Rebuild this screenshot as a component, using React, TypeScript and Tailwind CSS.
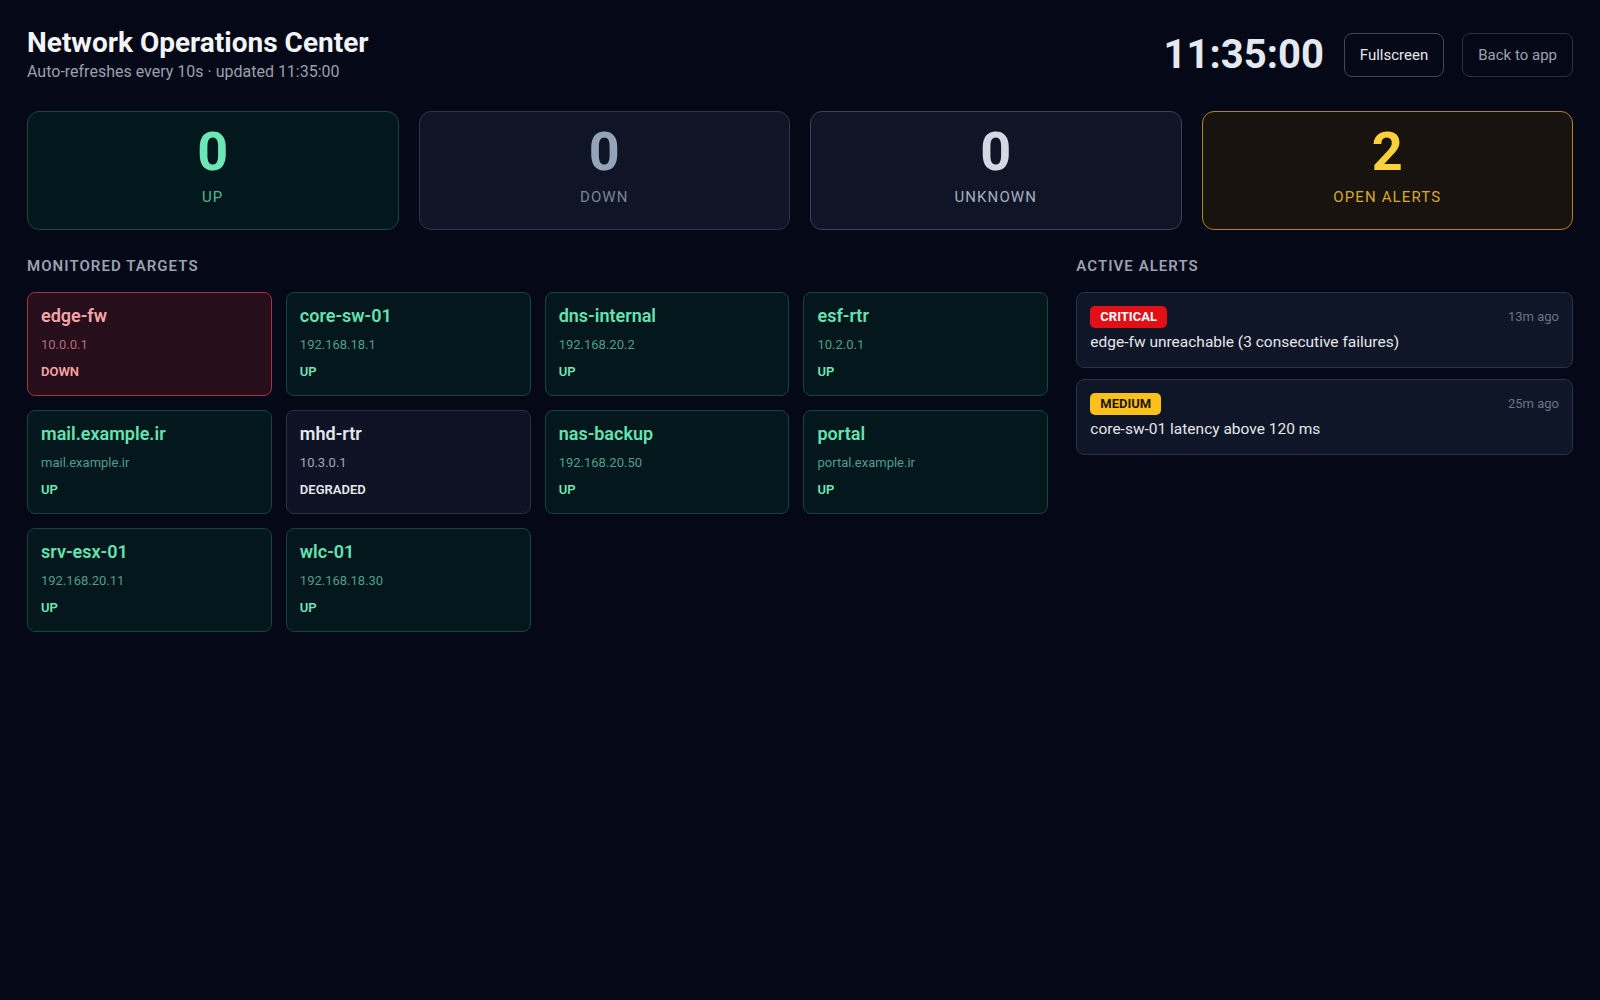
import React from "react";

type TargetStatus = "UP" | "DOWN" | "DEGRADED";

interface Target {
  name: string;
  address: string;
  status: TargetStatus;
}

interface Alert {
  severity: "CRITICAL" | "MEDIUM";
  message: string;
  age: string;
}

const targets: Target[] = [
  { name: "edge-fw", address: "10.0.0.1", status: "DOWN" },
  { name: "core-sw-01", address: "192.168.18.1", status: "UP" },
  { name: "dns-internal", address: "192.168.20.2", status: "UP" },
  { name: "esf-rtr", address: "10.2.0.1", status: "UP" },
  { name: "mail.example.ir", address: "mail.example.ir", status: "UP" },
  { name: "mhd-rtr", address: "10.3.0.1", status: "DEGRADED" },
  { name: "nas-backup", address: "192.168.20.50", status: "UP" },
  { name: "portal", address: "portal.example.ir", status: "UP" },
  { name: "srv-esx-01", address: "192.168.20.11", status: "UP" },
  { name: "wlc-01", address: "192.168.18.30", status: "UP" },
];

const alerts: Alert[] = [
  {
    severity: "CRITICAL",
    message: "edge-fw unreachable (3 consecutive failures)",
    age: "13m ago",
  },
  {
    severity: "MEDIUM",
    message: "core-sw-01 latency above 120 ms",
    age: "25m ago",
  },
];

const statCards = [
  {
    value: 0,
    label: "UP",
    box: "bg-[#03181d] border-[#124a45]",
    num: "text-[#6ee7b7]",
    lbl: "text-[#4cb892]",
  },
  {
    value: 0,
    label: "DOWN",
    box: "bg-[#0f1527] border-[#2e3549]",
    num: "text-[#94a3b8]",
    lbl: "text-[#7b8494]",
  },
  {
    value: 0,
    label: "UNKNOWN",
    box: "bg-[#0f1527] border-[#3a4254]",
    num: "text-[#d2d9e5]",
    lbl: "text-[#a7afbd]",
  },
  {
    value: 2,
    label: "OPEN ALERTS",
    box: "bg-[#18130f] border-[#b1861f]",
    num: "text-[#fcd03a]",
    lbl: "text-[#d8a92a]",
  },
];

const targetStyles: Record<
  TargetStatus,
  { box: string; name: string; addr: string; status: string }
> = {
  UP: {
    box: "bg-[#03171c] border-[#124741]",
    name: "text-[#62e3b0]",
    addr: "text-[#4d9f88]",
    status: "text-[#6ee7b7]",
  },
  DOWN: {
    box: "bg-[#260e1b] border-[#a93242]",
    name: "text-[#f8a5a9]",
    addr: "text-[#b46c76]",
    status: "text-[#fca5a5]",
  },
  DEGRADED: {
    box: "bg-[#0f1224] border-[#2b3046]",
    name: "text-[#e2e8f0]",
    addr: "text-[#a0a7b5]",
    status: "text-[#e5e7eb]",
  },
};

const TargetCard: React.FC<{ target: Target }> = ({ target }) => {
  const s = targetStyles[target.status];
  return (
    <div className={`rounded-lg border px-[13px] pt-[9px] pb-[13px] ${s.box}`}>
      <div className={`text-lg leading-7 font-semibold ${s.name}`}>
        {target.name}
      </div>
      <div className={`mt-[5px] text-[13px] leading-5 ${s.addr}`}>
        {target.address}
      </div>
      <div className={`mt-[7px] text-[13px] leading-5 font-semibold ${s.status}`}>
        {target.status}
      </div>
    </div>
  );
};

const AlertCard: React.FC<{ alert: Alert }> = ({ alert }) => {
  const badge =
    alert.severity === "CRITICAL"
      ? "bg-[#e30f17] text-white"
      : "bg-[#fcc01c] text-[#1c1606]";
  return (
    <div className="rounded-lg border border-[#283247] bg-[#0f1628] px-[13px] pt-[13px] pb-[14px]">
      <div className="flex items-center justify-between">
        <span
          className={`rounded-[5px] px-2.5 text-[13px] leading-[22px] font-bold ${badge}`}
        >
          {alert.severity}
        </span>
        <span className="text-[13px] text-[#6b7384]">{alert.age}</span>
      </div>
      <div className="mt-[3px] text-[15.5px] leading-[22px] text-[#e5e7eb]">
        {alert.message}
      </div>
    </div>
  );
};

export default function App() {
  return (
    <div className="min-h-screen bg-[#040817] px-[27px] pt-[26px] pb-10 font-['Roboto',sans-serif] text-white">
      {/* header */}
      <div className="flex items-center justify-between">
        <div>
          <h1 className="text-[28px] leading-[34px] font-bold text-[#f3f4f6]">
            Network Operations Center
          </h1>
          <p className="mt-px text-base leading-[22px] text-[#9aa1ae]">
            Auto-refreshes every 10s · updated 11:35:00
          </p>
        </div>
        <div className="flex items-center gap-[18px]">
          <div className="mr-0.5 text-[40px] leading-[48px] font-bold text-[#e4e8f0]">
            11:35:00
          </div>
          <button className="rounded-lg border border-[#414859] px-[15px] py-2.5 text-[15px] leading-[22px] text-[#e5e7eb]">
            Fullscreen
          </button>
          <button className="rounded-lg border border-[#2b3141] px-[15px] py-2.5 text-[15px] leading-[22px] text-[#9ca3af]">
            Back to app
          </button>
        </div>
      </div>

      {/* stats */}
      <div className="mt-7 grid grid-cols-4 gap-5">
        {statCards.map((c) => (
          <div
            key={c.label}
            className={`flex flex-col items-center rounded-xl border pt-[13px] pb-[22px] ${c.box}`}
          >
            <div className={`text-[54px] leading-none font-bold ${c.num}`}>
              {c.value}
            </div>
            <div className={`mt-2 text-[15px] leading-5 tracking-[0.075em] ${c.lbl}`}>
              {c.label}
            </div>
          </div>
        ))}
      </div>

      {/* body */}
      <div className="mt-[26px] grid grid-cols-3 gap-7">
        <div className="col-span-2">
          <h2 className="mb-4 text-[15px] leading-5 font-semibold tracking-[0.07em] text-[#9aa2b1]">
            MONITORED TARGETS
          </h2>
          <div className="grid grid-cols-4 gap-3.5">
            {targets.map((t) => (
              <TargetCard key={t.name} target={t} />
            ))}
          </div>
        </div>
        <div>
          <h2 className="mb-4 text-[15px] leading-5 font-semibold tracking-[0.07em] text-[#9aa2b1]">
            ACTIVE ALERTS
          </h2>
          <div className="flex flex-col gap-[11px]">
            {alerts.map((a) => (
              <AlertCard key={a.message} alert={a} />
            ))}
          </div>
        </div>
      </div>
    </div>
  );
}
